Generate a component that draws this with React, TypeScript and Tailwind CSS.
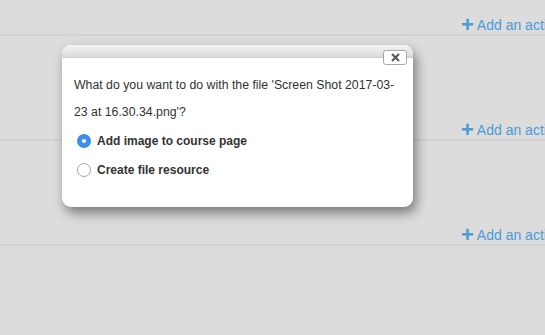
function AddActivity() {
  return (
    <a className="flex items-center gap-[3px] whitespace-nowrap text-[14px] leading-[16px] text-[#4a9bd6]">
      <span className="text-[22px] font-bold leading-[16px]">+</span>
      <span>Add an activity or resource</span>
    </a>
  );
}

function Section({ height }: { height: number }) {
  return (
    <div
      className="flex items-end overflow-hidden border-b-2 border-[#d2d2d2] pb-[1px] pl-[461px]"
      style={{ height }}
    >
      <AddActivity />
    </div>
  );
}

export default function App() {
  return (
    <div
      className="relative h-[335px] w-[545px] overflow-hidden bg-[#dcdcdc]"
      style={{ fontFamily: '"Liberation Sans", Arial, sans-serif' }}
    >
      <Section height={36} />
      <Section height={105} />
      <Section height={105} />

      <div className="absolute left-[62px] top-[45px] w-[351px] overflow-hidden rounded-[9px] bg-white shadow-[3px_6px_12px_rgba(0,0,0,0.45)]">
        <div className="h-[13px] border-b border-[#cfcfcf] bg-gradient-to-b from-[#f4f4f4] to-[#dadada]" />
        <button className="absolute right-[6px] top-[5px] flex h-[15px] w-[24px] items-center justify-center rounded-[3px] border border-[#a8a8a8] bg-white text-[#555]">
          <svg width="9" height="9" viewBox="0 0 9 9">
            <path d="M1 1L8 8M8 1L1 8" stroke="#555" strokeWidth="2" />
          </svg>
        </button>
        <div className="px-[12px] pb-[23px] pt-[14px] text-[12.3px] text-[#333]">
          <p className="leading-[27px]">
            What do you want to do with the file 'Screen Shot 2017-03-23 at 16.30.34.png'?
          </p>
          <div className="flex flex-col">
            <label className="flex h-[29px] items-center gap-[6px] pl-[3px] text-[12px] font-bold">
              <span className="flex h-[14px] w-[14px] items-center justify-center rounded-full bg-[#3b8fea]">
                <span className="h-[4px] w-[4px] rounded-full bg-white" />
              </span>
              Add image to course page
            </label>
            <label className="flex h-[29px] items-center gap-[6px] pl-[3px] text-[12px] font-bold">
              <span className="h-[14px] w-[14px] rounded-full border border-[#a8a8a8] bg-white" />
              Create file resource
            </label>
          </div>
        </div>
      </div>
    </div>
  );
}
